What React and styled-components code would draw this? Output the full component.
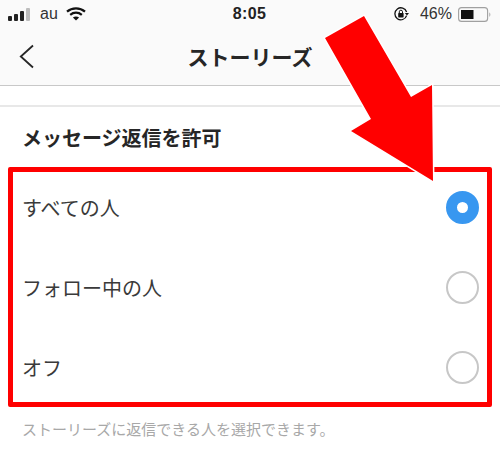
import React from 'react';
import styled, { createGlobalStyle } from 'styled-components';

const GlobalStyle = createGlobalStyle`
  html, body {
    margin: 0;
    padding: 0;
    background: #fff;
  }
`;

const Page = styled.div`
  position: relative;
  width: 500px;
  height: 462px;
  overflow: hidden;
  background: #fff;
  font-family: "Noto Sans CJK JP", "Liberation Sans", sans-serif;
  color: #262626;
`;

const Header = styled.header`
  height: 85px;
  background: #fafafa;
  border-bottom: 1px solid #c8c8c8;
`;

const StatusBar = styled.div`
  height: 28px;
  padding: 0 9px 0 8px;
  display: grid;
  grid-template-columns: 1fr auto 1fr;
  align-items: center;
  font-family: "Liberation Sans", sans-serif;
  font-size: 16px;
  color: #333;
`;

const StatusSide = styled.div`
  display: flex;
  align-items: center;
  gap: ${p => p.$gap}px;
  justify-content: ${p => (p.$end ? 'flex-end' : 'flex-start')};
`;

const LockSlot = styled.span`
  display: flex;
  margin-right: 4px;
`;

const Clock = styled.span`
  font-weight: 700;
  font-size: 16px;
  letter-spacing: 0.4px;
  color: #222;
`;

const NavBar = styled.div`
  height: 57px;
  padding: 0 19px;
  display: grid;
  grid-template-columns: 1fr auto 1fr;
  align-items: center;
`;

const NavTitle = styled.h1`
  margin: 0 0 2px;
  font-size: 21px;
  font-weight: 700;
  color: #262626;
`;

const Spacer = styled.div`
  height: 19px;
  border-bottom: 2px solid #e8e8e8;
`;

const Section = styled.main`
  padding: 0 8px;
`;

const SectionTitle = styled.h2`
  margin: 0;
  height: 60px;
  padding-left: 14px;
  display: flex;
  align-items: center;
  font-size: 20px;
  font-weight: 700;
  color: #262626;
`;

const OptionBox = styled.div`
  box-sizing: border-box;
  height: 240px;
  border: 5px solid #ff0000;
  border-radius: 2px;
  display: flex;
  flex-direction: column;
  justify-content: center;
`;

const Option = styled.div`
  height: 80px;
  flex: none;
  padding: 0 8px 0 9px;
  display: flex;
  align-items: center;
  justify-content: space-between;
  font-size: 20px;
  color: #3a3a3a;
`;

const Radio = styled.span`
  box-sizing: border-box;
  width: 33px;
  height: 33px;
  border-radius: 50%;
  border: ${p => (p.$checked ? '11px solid #3897f0' : '2px solid #c7c7c7')};
  background: #fff;
`;

const Note = styled.p`
  margin: 11px 0 0 14px;
  font-size: 15px;
  color: #a8a8a8;
`;

const Arrow = styled.svg`
  position: absolute;
  left: 0;
  top: 0;
  pointer-events: none;
`;

const SignalBars = () => (
  <svg width="24" height="14" viewBox="0 0 24 14">
    <rect x="0" y="9" width="4" height="5" rx="1" fill="#222" />
    <rect x="6" y="7" width="4" height="7" rx="1" fill="#222" />
    <rect x="12" y="4" width="4" height="10" rx="1" fill="#222" />
    <rect x="18" y="1" width="4" height="13" rx="1" fill="#bdbdbd" />
  </svg>
);

const Wifi = () => (
  <svg width="20" height="14" viewBox="0 0 20 14" fill="none" stroke="#111" strokeWidth="2.2">
    <path d="M1 4.6 C6 0.2 14 0.2 19 4.6" />
    <path d="M4.2 7.8 C7.6 5 12.4 5 15.8 7.8" />
    <path d="M10 13.6 L6.9 10.6 C8.8 9.2 11.2 9.2 13.1 10.6 Z" fill="#111" stroke="none" />
  </svg>
);

const RotationLock = () => (
  <svg width="16" height="14" viewBox="0 0 16 14" fill="none">
    <path d="M12.6 8.6 A6 6 0 1 1 12.6 5" stroke="#111" strokeWidth="1.3" />
    <path d="M10.8 6 L15 6 L13 8.6 Z" fill="#111" />
    <rect x="4.2" y="6" width="5.4" height="4.4" rx="0.6" fill="#111" />
    <path d="M5.3 6 V4.8 A1.6 1.6 0 0 1 8.5 4.8 V6" stroke="#111" strokeWidth="1" />
  </svg>
);

const Battery = () => (
  <svg width="33" height="15" viewBox="0 0 33 15" fill="none">
    <rect x="0.6" y="0.6" width="29" height="13.8" rx="3" stroke="#a0a0a0" strokeWidth="1.1" />
    <rect x="3" y="3" width="12.5" height="9" fill="#111" />
    <path d="M31.4 5.4 C32.6 5.8 32.6 9.2 31.4 9.6 Z" fill="#a0a0a0" />
  </svg>
);

const BackChevron = () => (
  <svg width="15" height="25" viewBox="0 0 15 25" fill="none" stroke="#262626" strokeWidth="1.8">
    <path d="M14 1.5 L1.8 12.5 L14 23.5" />
  </svg>
);

const options = [
  { label: 'すべての人', checked: true },
  { label: 'フォロー中の人', checked: false },
  { label: 'オフ', checked: false },
];

export default function App() {
  return (
    <Page>
      <GlobalStyle />
      <Header>
        <StatusBar>
          <StatusSide $gap={8}>
            <SignalBars />
            <span>au</span>
            <Wifi />
          </StatusSide>
          <Clock>8:05</Clock>
          <StatusSide $end $gap={6}>
            <LockSlot>
              <RotationLock />
            </LockSlot>
            <span>46%</span>
            <Battery />
          </StatusSide>
        </StatusBar>
        <NavBar>
          <BackChevron />
          <NavTitle>ストーリーズ</NavTitle>
        </NavBar>
      </Header>
      <Spacer />
      <Section>
        <SectionTitle>メッセージ返信を許可</SectionTitle>
        <OptionBox>
          {options.map(o => (
            <Option key={o.label}>
              <span>{o.label}</span>
              <Radio $checked={o.checked} />
            </Option>
          ))}
        </OptionBox>
        <Note>ストーリーズに返信できる人を選択できます。</Note>
      </Section>
      <Arrow width="500" height="462" viewBox="0 0 500 462">
        <polygon
          points="364,16 325,38 371,119 351,131 433,181 432,85 411,97"
          fill="#ff0000"
          stroke="#fff"
          strokeWidth="3"
          paintOrder="stroke"
        />
      </Arrow>
    </Page>
  );
}
